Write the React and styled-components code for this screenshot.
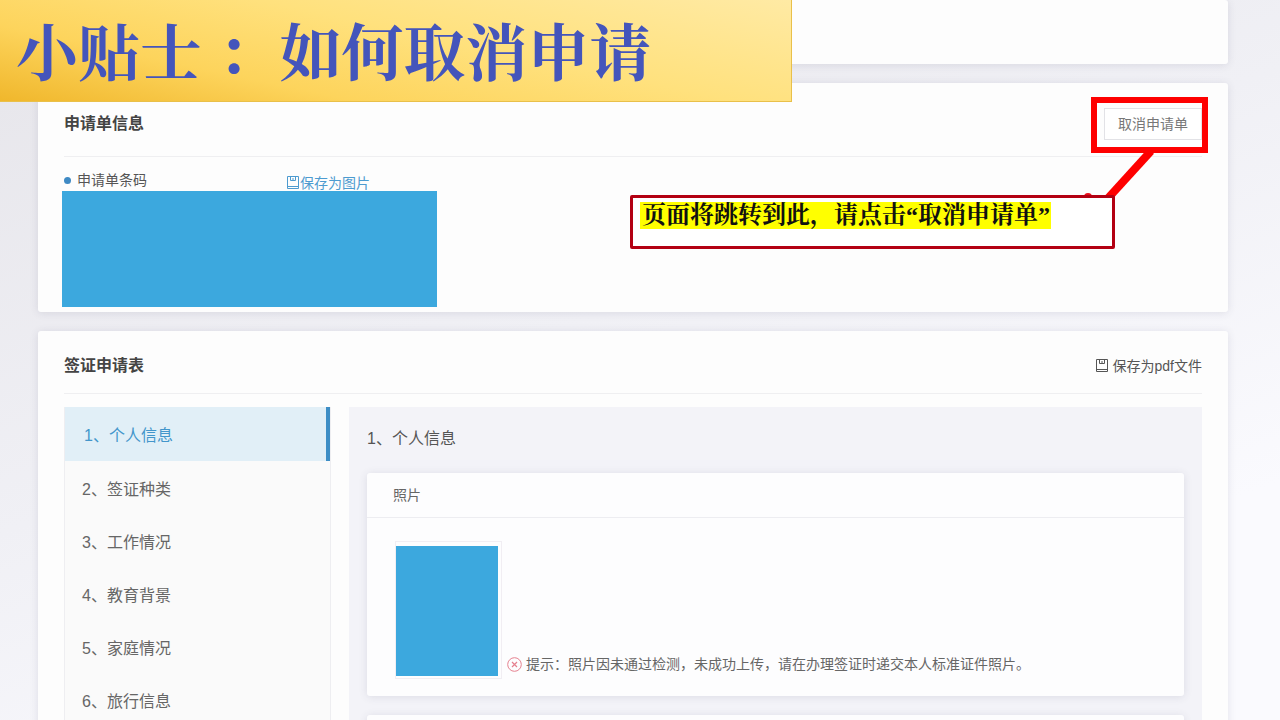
import React, { useState } from "react";
import styled, { createGlobalStyle } from "styled-components";

const GlobalStyle = createGlobalStyle`
  * {
    box-sizing: border-box;
  }

  body {
    margin: 0;
    overflow: hidden;
    font-family: "Liberation Sans", "Noto Sans CJK SC", sans-serif;
    font-size: 14px;
    color: #555;
    background: linear-gradient(160deg, #e6e5ea 0%, #f0f0f5 45%, #fafafe 80%) fixed;
  }
`;

const Page = styled.main`
  position: relative;
  display: flex;
  flex-direction: column;
  gap: 19px;
  height: 100vh;
  padding: 0 52px 0 38px;
  overflow: hidden;
`;

const Card = styled.section`
  position: relative;
  flex-shrink: 0;
  padding: 0 26px;
  background: #fdfdfd;
  border-radius: 3px;
  box-shadow: 0 1px 8px rgba(60, 60, 90, 0.12);
`;

const PreviousCard = styled(Card)`
  height: 64px;
`;

const CardHeader = styled.header`
  display: flex;
  align-items: center;
  justify-content: space-between;
  height: ${(props) => props.$height};
  padding-top: 8px;
  border-bottom: 1px solid #efeff1;
`;

const CardTitle = styled.h2`
  margin: 0;
  font-size: 16px;
  line-height: 24px;
  font-weight: bold;
  color: #444;
`;

const Banner = styled.div`
  position: absolute;
  top: 0;
  left: 0;
  z-index: 2;
  padding: 4px 139px 5px 16px;
  border: solid #e9c04a;
  border-width: 0 1px 1px 0;
  background: linear-gradient(12deg, #f0b72c 0%, #fdd45c 28%, #ffe17d 58%, #ffeaa4 100%);
`;

const BannerTitle = styled.h1`
  margin: 0;
  font-family: "Noto Serif CJK SC", "Noto Sans CJK SC", serif;
  font-size: 62px;
  line-height: 92px;
  font-weight: bold;
  white-space: nowrap;
  color: #4455bb;
`;

const CancelWrap = styled.div`
  position: relative;
`;

const CancelButton = styled.button`
  display: block;
  height: 32px;
  padding: 0 13px 2px;
  border: 1px solid #e2e2e6;
  background: #fff;
  font-family: inherit;
  font-size: 14px;
  color: #777;
`;

const RedFrame = styled.span`
  position: absolute;
  inset: -11px -6px -13px -13px;
  border: 6px solid #fe0000;
  pointer-events: none;
`;

const BarcodeRow = styled.div`
  display: flex;
  align-items: flex-end;
  justify-content: flex-start;
  height: 34px;
  line-height: 20px;
`;

const BarcodeLabel = styled.span`
  display: flex;
  align-items: center;
  gap: 6px;
  width: 223px;
  margin-bottom: 1px;

  &::before {
    content: "";
    width: 7px;
    height: 7px;
    border-radius: 50%;
    background: #3f8ac4;
  }
`;

const SaveLink = styled.a`
  display: flex;
  align-items: center;
  gap: ${(props) => props.$gap};
  line-height: ${(props) => props.$lineHeight};
  color: ${(props) => props.$color};
  text-decoration: none;
`;

const BarcodeBlock = styled.div`
  width: 375px;
  height: 116px;
  margin: 0 0 5px -2px;
  background: #3ca8de;
`;

const Callout = styled.div`
  position: absolute;
  top: 112px;
  right: 113px;
  width: 485px;
  height: 54px;
  padding: 4px 7px;
  border: 3px solid #b30012;
  border-radius: 2px;
  background: #fff;
`;

const CalloutText = styled.mark`
  display: inline-block;
  height: 27px;
  padding: 0 1px 0 2px;
  background: #ff0;
  font-family: "Liberation Serif", "Noto Serif CJK SC", "Noto Sans CJK SC", serif;
  font-size: 24px;
  line-height: 27px;
  font-weight: bold;
  white-space: nowrap;
  color: #111;
`;

const Connector = styled.svg`
  position: absolute;
  top: 68px;
  right: 68px;
`;

const FormBody = styled.div`
  display: flex;
  gap: 18px;
  padding-top: 13px;
`;

const SideNav = styled.nav`
  flex: 0 0 267px;
  border: solid #eeeef1;
  border-width: 0 1px;
  background: #fafafa;
`;

const NavItem = styled.button`
  display: block;
  width: 100%;
  height: ${(props) => (props.$active ? "54px" : "53px")};
  padding: 0 0 0 ${(props) => (props.$active ? "19px" : "17px")};
  border: 0;
  border-right: ${(props) => (props.$active ? "4px solid #3c8dc5" : "0")};
  background: ${(props) => (props.$active ? "#e1eff7" : "transparent")};
  font-family: inherit;
  font-size: 16px;
  text-align: left;
  color: ${(props) => (props.$active ? "#4396cb" : "#666")};
`;

const Panel = styled.div`
  flex: 1;
  padding: 20px 18px;
  background: #f3f3f8;
`;

const PanelTitle = styled.h3`
  margin: 0 0 22px;
  font-size: 16px;
  line-height: 24px;
  font-weight: normal;
`;

const PanelCard = styled.div`
  min-height: 60px;
  margin-bottom: 19px;
  border-radius: 3px;
  background: #fdfdfe;
  box-shadow: 0 1px 8px rgba(60, 60, 90, 0.12);
`;

const PanelCardTitle = styled.h4`
  margin: 0;
  padding: 0 26px;
  border-bottom: 1px solid #ededf1;
  font-size: 14px;
  line-height: 44px;
  font-weight: normal;
  color: #666;
`;

const PhotoRow = styled.div`
  display: flex;
  align-items: flex-end;
  gap: 5px;
  padding: 23px 28px 17px;
`;

const PhotoFrame = styled.div`
  padding: 4px 3px 2px 0;
  border: 1px solid #f1eef3;
`;

const Photo = styled.div`
  width: 102px;
  height: 130px;
  background: #3ca8de;
`;

const Tip = styled.p`
  display: flex;
  align-items: center;
  gap: 4px;
  margin: 0 0 5px;
  line-height: 20px;
  color: #666;
`;

const SaveIcon = () => (
  <svg width="12" height="14" viewBox="0 0 12 14" fill="none" stroke="currentColor" aria-hidden="true">
    <path d="M.5 .5h11v12h-11zM.5 10.5h11M3.5 .5v4h5v-4M6 2v2" />
  </svg>
);

const ErrorIcon = () => (
  <svg width="15" height="15" viewBox="0 0 15 15" fill="none" stroke="#e5808f" aria-hidden="true">
    <circle cx="7.5" cy="7.5" r="6.8" />
    <path d="M5 5l5 5M10 5l-5 5" strokeWidth="1.2" />
  </svg>
);

const sections = ["个人信息", "签证种类", "工作情况", "教育背景", "家庭情况", "旅行信息"];

const App = () => {
  const [active, setActive] = useState(0);

  return (
    <>
      <GlobalStyle />
      <Page>
        <Banner>
          <BannerTitle>小贴士 ：如何取消申请</BannerTitle>
        </Banner>

        <PreviousCard />

        <Card>
          <CardHeader $height="74px">
            <CardTitle>申请单信息</CardTitle>
            <CancelWrap>
              <CancelButton type="button">取消申请单</CancelButton>
              <RedFrame />
            </CancelWrap>
          </CardHeader>
          <BarcodeRow>
            <BarcodeLabel>申请单条码</BarcodeLabel>
            <SaveLink href="#image" $color="#4d9bd0" $gap="1px" $lineHeight="16px">
              <SaveIcon />
              保存为图片
            </SaveLink>
          </BarcodeRow>
          <BarcodeBlock />

          <Connector width="80" height="50" viewBox="0 0 80 50" aria-hidden="true">
            <path d="M71 0L20 56" stroke="#fe0000" strokeWidth="8" />
            <circle cx="8" cy="46" r="4" fill="#e8101c" />
          </Connector>
          <Callout>
            <CalloutText>页面将跳转到此，请点击“取消申请单”</CalloutText>
          </Callout>
        </Card>

        <Card>
          <CardHeader $height="63px">
            <CardTitle>签证申请表</CardTitle>
            <SaveLink href="#pdf" $color="#555" $gap="5px" $lineHeight="20px">
              <SaveIcon />
              保存为pdf文件
            </SaveLink>
          </CardHeader>
          <FormBody>
            <SideNav>
              {sections.map((name, index) => (
                <NavItem
                  key={name}
                  type="button"
                  $active={index === active}
                  onClick={() => setActive(index)}
                >
                  {index + 1}、{name}
                </NavItem>
              ))}
            </SideNav>
            <Panel>
              <PanelTitle>
                {active + 1}、{sections[active]}
              </PanelTitle>
              <PanelCard>
                <PanelCardTitle>照片</PanelCardTitle>
                <PhotoRow>
                  <PhotoFrame>
                    <Photo />
                  </PhotoFrame>
                  <Tip>
                    <ErrorIcon />
                    提示：照片因未通过检测，未成功上传，请在办理签证时递交本人标准证件照片。
                  </Tip>
                </PhotoRow>
              </PanelCard>
              <PanelCard />
            </Panel>
          </FormBody>
        </Card>
      </Page>
    </>
  );
};

export default App;
